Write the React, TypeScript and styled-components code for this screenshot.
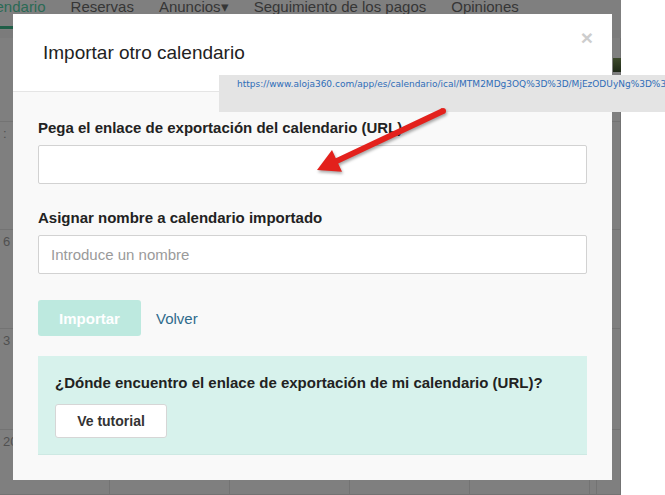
import styled, { createGlobalStyle } from 'styled-components';

const GlobalStyle = createGlobalStyle`
  html, body {
    margin: 0;
    padding: 0;
    background: #fff;
  }
  body {
    font-family: 'Liberation Sans', Arial, sans-serif;
  }
`;

const Screen = styled.div`
  position: relative;
  width: 665px;
  height: 495px;
  display: flex;
  overflow: hidden;
`;

// dimmed page behind the dialog
const Backdrop = styled.div`
  width: 621px;
  flex-shrink: 0;
  background: #7f7f7f;
  display: flex;
  flex-direction: column;
`;

const Nav = styled.nav`
  height: 30px;
  display: flex;
  gap: 25px;
  align-items: flex-start;
  border-bottom: 8px solid #7b7b7b;
`;

const NavItem = styled.span<{ $active?: boolean }>`
  font-size: 15px;
  line-height: 18px;
  margin-top: -2px;
  height: 31px;
  box-sizing: border-box;
  white-space: nowrap;
  color: ${(p) => (p.$active ? '#2b6a55' : '#363636')};
  border-bottom: ${(p) => (p.$active ? '3px solid #1f5e47' : 'none')};
  margin-left: ${(p) => (p.$active ? '-27px' : '0')};
`;

const Calendar = styled.div`
  flex: 1;
  display: grid;
  grid-template-columns: 110px repeat(4, 120px) 6px 25px;
  grid-template-rows: 84px 108px 99px 101px 1fr;
`;

const Cell = styled.div`
  border-right: 1px solid #737373;
  border-bottom: 1px solid #737373;
  font-size: 13px;
  line-height: 16px;
  padding: 4px 3px 0;
  color: #505050;
`;

const Thumb = styled.div`
  width: 8px;
  height: 14px;
  margin: 16px 0 0 14px;
  background: linear-gradient(#3d4a2c, #1f2a18);
`;

const Aside = styled.div`
  flex: 1;
  background: #fff;
`;

const Modal = styled.div`
  position: absolute;
  left: 13px;
  top: 14px;
  width: 599px;
  height: 466px;
  background: #f9f9f9;
  display: flex;
  flex-direction: column;
`;

const ModalHeader = styled.header`
  position: relative;
  height: 78px;
  box-sizing: border-box;
  background: #fff;
  border-bottom: 1px solid #e5e5e5;
  display: flex;
  align-items: center;
  padding: 0 30px;
`;

const Title = styled.h4`
  margin: 0;
  font-size: 19px;
  font-weight: normal;
  color: #222;
`;

const Close = styled.span`
  position: absolute;
  right: 19px;
  top: 12px;
  font-size: 21px;
  font-weight: bold;
  color: #cdcdcd;
`;

const ModalBody = styled.div`
  flex: 1;
  display: flex;
  flex-direction: column;
  padding: 27px 25px 25px;
`;

const Field = styled.div<{ $gap?: number }>`
  display: flex;
  flex-direction: column;
  gap: 8px;
  margin-top: ${(p) => p.$gap ?? 0}px;
`;

const Label = styled.label`
  font-size: 15px;
  line-height: 18px;
  font-weight: bold;
  color: #222;
`;

const Input = styled.input`
  height: 39px;
  box-sizing: border-box;
  border: 1px solid #d2d2d2;
  border-radius: 2px;
  background: #fff;
  padding: 0 12px;
  font-family: inherit;
  font-size: 15px;
  color: #333;
  &::placeholder {
    color: #9a9a9a;
  }
`;

const Actions = styled.div`
  display: flex;
  align-items: center;
  gap: 15px;
  margin-top: 26px;
`;

const PrimaryButton = styled.button`
  width: 103px;
  height: 36px;
  border: none;
  border-radius: 3px;
  background: #bde9df;
  color: #fff;
  font-family: inherit;
  font-size: 15px;
  font-weight: bold;
`;

const BackLink = styled.a`
  font-size: 15px;
  color: #2f6b8c;
  text-decoration: none;
`;

const HelpBox = styled.div`
  margin-top: 20px;
  height: 99px;
  box-sizing: border-box;
  padding: 18px 17px 0;
  background: #d7f2ec;
  border-bottom: 1px solid #cde9e3;
  display: flex;
  flex-direction: column;
  align-items: flex-start;
  gap: 12px;
`;

const HelpText = styled.p`
  margin: 0;
  font-size: 15px;
  line-height: 18px;
  font-weight: bold;
  color: #222;
`;

const SecondaryButton = styled.button`
  width: 112px;
  height: 34px;
  border: 1px solid #d6d6d6;
  border-radius: 3px;
  background: #fff;
  color: #333;
  font-family: inherit;
  font-size: 14px;
  font-weight: bold;
`;

const UrlTip = styled.div`
  position: absolute;
  left: 219px;
  top: 75px;
  width: 446px;
  height: 37px;
  box-sizing: border-box;
  padding: 4px 0 0 18px;
  background: #e4e4e4;
  color: #2f6db8;
  font-family: 'DejaVu Sans', sans-serif;
  font-size: 9px;
  line-height: 10px;
  white-space: nowrap;
  overflow: hidden;
`;

const Pointer = styled.svg`
  position: absolute;
  left: 0;
  top: 0;
  pointer-events: none;
  filter: drop-shadow(1px 2px 1.5px rgba(0, 0, 0, 0.35));
`;

const rows = [
  ['', '', '', '', '', '', 'thumb'],
  [':', '', '', '', '', '', ''],
  ['6', '', '', '', '', '', ''],
  ['3', '', '', '', '', '', ''],
  ['20', '', '', '', '', '', ''],
];

export default function App() {
  return (
    <>
      <GlobalStyle />
      <Screen>
        <Backdrop>
          <Nav>
            <NavItem $active>Calendario</NavItem>
            <NavItem>Reservas</NavItem>
            <NavItem>Anuncios▾</NavItem>
            <NavItem>Seguimiento de los pagos</NavItem>
            <NavItem>Opiniones</NavItem>
          </Nav>
          <Calendar>
            {rows.map((row, r) =>
              row.map((day, c) => (
                <Cell key={`${r}-${c}`}>{day === 'thumb' ? <Thumb /> : day}</Cell>
              ))
            )}
          </Calendar>
        </Backdrop>
        <Aside />

        <Modal>
          <ModalHeader>
            <Title>Importar otro calendario</Title>
            <Close>×</Close>
          </ModalHeader>
          <ModalBody>
            <Field>
              <Label>Pega el enlace de exportación del calendario (URL)</Label>
              <Input />
            </Field>
            <Field $gap={25}>
              <Label>Asignar nombre a calendario importado</Label>
              <Input placeholder="Introduce un nombre" />
            </Field>
            <Actions>
              <PrimaryButton disabled>Importar</PrimaryButton>
              <BackLink href="#">Volver</BackLink>
            </Actions>
            <HelpBox>
              <HelpText>¿Dónde encuentro el enlace de exportación de mi calendario (URL)?</HelpText>
              <SecondaryButton>Ve tutorial</SecondaryButton>
            </HelpBox>
          </ModalBody>
        </Modal>

        <UrlTip>
          https://www.aloja360.com/app/es/calendario/ical/MTM2MDg3OQ%3D%3D/MjEzODUyNg%3D%3D
        </UrlTip>

        <Pointer width="665" height="495" viewBox="0 0 665 495">
          <polygon
            fill="#e3211c"
            points="444.2,113.7 338.2,163.6 342,171.8 317,170 332,150 335.8,158.2 441.8,108.3"
          />
          <circle cx="443" cy="111" r="3" fill="#e3211c" />
        </Pointer>
      </Screen>
    </>
  );
}
